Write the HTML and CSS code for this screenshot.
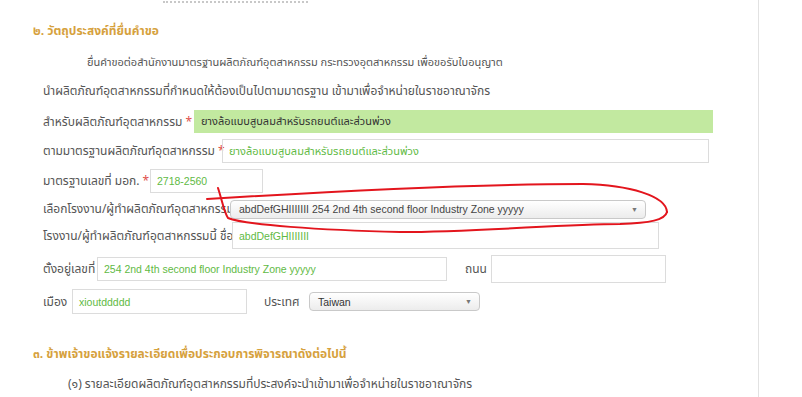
FILE: index.html
```
<!DOCTYPE html>
<html lang="th">
<head>
  <meta charset="UTF-8" />
  <meta name="viewport" content="width=device-width, initial-scale=1.0"/>
  <title>คำขอใบอนุญาต</title>
  <link rel="stylesheet" href="styles.css">
</head>
<body>
  <div class="page">
    <div class="main">
      <div class="sign-line"></div>

      <h3 class="section-title">๒. วัตถุประสงค์ที่ยื่นคำขอ</h3>
      <p class="para indent">ยื่นคำขอต่อสำนักงานมาตรฐานผลิตภัณฑ์อุตสาหกรรม กระทรวงอุตสาหกรรม เพื่อขอรับใบอนุญาต</p>
      <p class="para">นำผลิตภัณฑ์อุตสาหกรรมที่กำหนดให้ต้องเป็นไปตามมาตรฐาน เข้ามาเพื่อจำหน่ายในราชอาณาจักร</p>

      <div class="form">
        <div class="row r1">
          <label class="lbl w1">สำหรับผลิตภัณฑ์อุตสาหกรรม <span class="req">*</span></label>
          <div class="field filled f1">ยางล้อแบบสูบลมสำหรับรถยนต์และส่วนพ่วง</div>
        </div>
        <div class="row r2">
          <label class="lbl w2">ตามมาตรฐานผลิตภัณฑ์อุตสาหกรรม <span class="req">*</span></label>
          <div class="field thai f2">ยางล้อแบบสูบลมสำหรับรถยนต์และส่วนพ่วง</div>
        </div>
        <div class="row r3">
          <label class="lbl w3">มาตรฐานเลขที่ มอก. <span class="req">*</span></label>
          <div class="field f3">2718-2560</div>
        </div>
        <div class="row r4">
          <label class="lbl w4">เลือกโรงงาน/ผู้ทำผลิตภัณฑ์อุตสาหกรรม</label>
          <div class="select f4">
            <span>abdDefGHIIIIIII 254 2nd 4th second floor Industry Zone yyyyy</span>
            <span class="caret">▼</span>
          </div>
        </div>
        <div class="row r5">
          <label class="lbl w5">โรงงาน/ผู้ทำผลิตภัณฑ์อุตสาหกรรมนี้ ชื่อ</label>
          <div class="field f5">abdDefGHIIIIIII</div>
        </div>
        <div class="row r6">
          <label class="lbl w6">ตั้งอยู่เลขที่</label>
          <div class="field f6">254 2nd 4th second floor Industry Zone yyyyy</div>
          <label class="lbl w-street">ถนน</label>
          <div class="field tall f-street"></div>
        </div>
        <div class="row r7">
          <label class="lbl w7">เมือง</label>
          <div class="field f7">xioutddddd</div>
          <label class="lbl w-country">ประเทศ</label>
          <div class="select f-country">
            <span class="dark">Taiwan</span>
            <span class="caret">▼</span>
          </div>
        </div>
      </div>

      <h3 class="section-title second">๓. ข้าพเจ้าขอแจ้งรายละเอียดเพื่อประกอบการพิจารณาดังต่อไปนี้</h3>
      <p class="para sub">(๑) รายละเอียดผลิตภัณฑ์อุตสาหกรรมที่ประสงค์จะนำเข้ามาเพื่อจำหน่ายในราชอาณาจักร</p>
    </div>
    <div class="side"></div>

    <!-- red pen mark drawn over the screenshot -->
    <svg class="pen-mark" width="802" height="397" viewBox="0 0 802 397">
      <path d="M207,199 C320,192 470,184 583,184 C630,185 666,196 667,212" />
      <path d="M218,188 C222,200 224,212 228,218 C245,225 320,230 400,232 C480,232 560,224 620,224 C650,223 665,220 667,212" />
    </svg>
  </div>
</body>
</html>
```

FILE: styles.css
```
body {
  margin: 0;
  background: white;
  font-family: "Noto Sans Thai", "Noto Sans", "DejaVu Sans", sans-serif;
  color: #555;
}

.page {
  position: relative;
  display: flex;
  height: 397px;
  overflow: hidden;
}

.main {
  width: 759px;
  padding-left: 33px;
  box-sizing: border-box;
  border-right: 1px solid #e2e2e2;
}

.side {
  flex: 1;
}

.sign-line {
  width: 145px;
  margin-left: 130px;
  border-bottom: 2px dotted #c8c8c8;
  height: 1px;
}

.section-title {
  margin: 18px 0 0;
  font-size: 12px;
  line-height: 20px;
  font-weight: bold;
  color: #d6a13d;
}

.section-title.second {
  margin-top: 30px;
}

.para {
  margin: 0 0 0 10px;
  font-size: 12px;
  line-height: 29px;
}

.para.indent {
  margin-top: 7px;
  padding-left: 44px;
  font-size: 11px;
}

.para.sub {
  margin-top: 6px;
  padding-left: 25px;
}

.form {
  margin-left: 10px;
  margin-top: 4px;
}

.row {
  display: flex;
  align-items: center;
  font-size: 12px;
}

.r1 { height: 23px; }
.r2 { height: 24px; margin-top: 6px; }
.r3 { height: 24px; margin-top: 6px; }
.r4 { height: 24px; margin-top: 4px; }
.r5 { height: 27px; margin-top: 1px; }
.r6 { height: 28px; margin-top: 6px; }
.r7 { height: 25px; margin-top: 6px; }

.lbl {
  flex: none;
  white-space: nowrap;
}

.req {
  color: #e0504c;
}

.w1 { width: 151px; }
.w2 { width: 179px; }
.w3 { width: 107px; }
.w4 { width: 187px; }
.w5 { width: 189px; }
.w6 { width: 54px; }
.w7 { width: 29px; }
.w-street { width: 26px; margin-left: 18px; }
.w-country { width: 45px; margin-left: 17px; }

.field {
  flex: none;
  box-sizing: border-box;
  height: 100%;
  border: 1px solid #dcdcdc;
  padding: 0 6px;
  display: flex;
  align-items: center;
  font-family: "Liberation Sans", Arial, sans-serif;
  font-size: 10.5px;
  color: #5fba45;
  white-space: nowrap;
  overflow: hidden;
}

.field.thai {
  font-family: "Noto Sans Thai", "Noto Sans", "DejaVu Sans", sans-serif;
  font-size: 11px;
}

.field.filled {
  background: #c2e9a0;
  border-color: #c2e9a0;
  color: #333;
  font-family: "Noto Sans Thai", "Noto Sans", "DejaVu Sans", sans-serif;
  font-size: 11px;
}

.field.tall {
  height: 28px;
}

.r6 .f6 {
  height: 24px;
}

.f1 { width: 519px; }
.f2 { width: 487px; }
.f3 { width: 113px; }
.f5 { width: 427px; }
.f6 { width: 350px; }
.f-street { width: 175px; }
.f7 { width: 175px; }

.select {
  flex: none;
  box-sizing: border-box;
  height: 19px;
  border: 1px solid #c9c9c9;
  border-radius: 4px;
  background: linear-gradient(#ffffff, #ececec);
  display: flex;
  align-items: center;
  justify-content: space-between;
  padding: 0 7px 0 8px;
  font-family: "Liberation Sans", Arial, sans-serif;
  font-size: 10.5px;
  color: #444;
  white-space: nowrap;
}

.select .dark {
  color: #333;
}

.caret {
  font-size: 7px;
  color: #777;
}

.f4 { width: 416px; }
.f-country { width: 171px; }

.pen-mark {
  position: absolute;
  left: 0;
  top: 0;
  pointer-events: none;
}

.pen-mark path {
  fill: none;
  stroke: #e3151d;
  stroke-width: 2;
  stroke-linecap: round;
}
```
